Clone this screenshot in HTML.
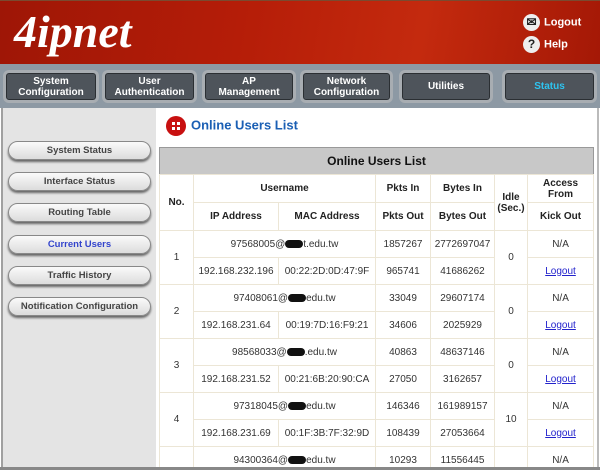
<!DOCTYPE html>
<html><head><meta charset="utf-8"><style>
*{margin:0;padding:0;box-sizing:border-box}
html,body{width:600px;height:470px;overflow:hidden}
body{background:#fff;font-family:"Liberation Sans",Arial,sans-serif;position:relative}
#hdr{position:absolute;left:0;top:0;width:600px;height:64px;background:linear-gradient(100deg,#9e1606 0%,#b51d08 40%,#c42a0e 70%,#a41806 100%);border-top:1px solid #7a4a30}
#logo{position:absolute;left:14px;top:4px;font-family:"Liberation Serif",serif;font-style:italic;font-weight:bold;font-size:46px;color:#fff}
.hl{position:absolute;left:523px;color:#fff;font-weight:bold;font-size:11px}
.hl i{display:inline-block;width:17px;height:17px;border-radius:50%;background:#eee;color:#222;font-style:normal;text-align:center;line-height:17px;font-size:12px;vertical-align:middle;margin-right:4px}
#nav{position:absolute;left:0;top:64px;width:600px;height:44px;background:#8d99a4}
.nb{position:absolute;top:6px;height:33px;border-radius:6px;background:#4e545b;border:3px solid #a8adb2;box-shadow:inset 0 0 0 1px #2b2f33;color:#fff;font-weight:bold;font-size:10px;text-align:center;display:flex;align-items:center;justify-content:center;line-height:11px}
#side{position:absolute;left:1px;top:108px;width:155px;height:359px;background:#e4e4e4;border-left:2px solid #a0a0a0}
.sb{position:absolute;left:5px;width:143px;height:19px;border-radius:10px;background:linear-gradient(#fafafa,#dcdcdc);border:1px solid #888;box-shadow:0 2px 2px #666;text-align:center;font-size:9.5px;font-weight:bold;color:#444;line-height:17px}
#bot{position:absolute;left:0;top:467px;width:600px;height:3px;background:#888;z-index:5}
#rb{position:absolute;left:597px;top:108px;width:2px;height:359px;background:#bbb}
#ttl{position:absolute;left:166px;top:116px;font-size:13px;font-weight:bold;color:#1a5fb4}
#ttl i{display:inline-block;width:20px;height:20px;border-radius:50%;background:#c81010;vertical-align:middle;margin-right:5px;position:relative}
#ttl i:after{content:"";position:absolute;left:6px;top:6px;width:8px;height:8px;background:linear-gradient(#c81010,#c81010) center/8px 2px no-repeat,linear-gradient(90deg,#fff 3px,transparent 3px,transparent 5px,#fff 5px)}
#clip{position:absolute;left:0;top:108px;width:600px;height:359px;overflow:hidden}
table{position:absolute;left:159px;top:39px;width:434px;border-collapse:collapse;border:1px solid #999;font-size:10px;color:#333;text-align:center;table-layout:fixed}
td{border:1px solid #ece6d6;height:27px;padding:0}
th{background:#c8c8c8;height:27px;font-size:12px;color:#111}
.h td{font-weight:bold;color:#222;height:28px}
a{color:#2222cc;text-decoration:underline}
.bl{display:inline-block;width:18px;height:8px;background:#111;border-radius:4px;vertical-align:middle}
</style></head><body>
<div id="hdr"><div id="logo">4ipnet</div>
<div class="hl" style="top:13px"><i>✉</i>Logout</div>
<div class="hl" style="top:35px"><i>?</i>Help</div></div>
<div id="nav">
<div class="nb" style="left:3px;width:96px">System<br>Configuration</div>
<div class="nb" style="left:102px;width:95px">User<br>Authentication</div>
<div class="nb" style="left:202px;width:94px">AP<br>Management</div>
<div class="nb" style="left:300px;width:93px">Network<br>Configuration</div>
<div class="nb" style="left:399px;width:94px">Utilities</div>
<div class="nb" style="left:502px;width:95px;color:#2ec4f0">Status</div>
</div>
<div id="side">
<div class="sb" style="top:33px">System Status</div>
<div class="sb" style="top:64px">Interface Status</div>
<div class="sb" style="top:95px">Routing Table</div>
<div class="sb" style="top:127px;color:#3344cc">Current Users</div>
<div class="sb" style="top:158px">Traffic History</div>
<div class="sb" style="top:189px">Notification Configuration</div>
</div>
<div id="rb"></div><div id="bot"></div>
<div id="ttl"><i></i>Online Users List</div>
<div id="clip">
<table>
<col style="width:34px"><col style="width:85px"><col style="width:97px"><col style="width:55px"><col style="width:64px"><col style="width:33px"><col style="width:66px">
<tr><th colspan="7">Online Users List</th></tr>
<tr class="h"><td rowspan="2">No.</td><td colspan="2">Username</td><td>Pkts In</td><td>Bytes In</td><td rowspan="2">Idle<br>(Sec.)</td><td>Access<br>From</td></tr>
<tr class="h"><td>IP Address</td><td>MAC Address</td><td>Pkts Out</td><td>Bytes Out</td><td>Kick Out</td></tr>
<tr><td rowspan="2">1</td><td colspan="2">97568005@<span class="bl"></span>t.edu.tw</td><td>1857267</td><td>2772697047</td><td rowspan="2">0</td><td>N/A</td></tr>
<tr><td>192.168.232.196</td><td>00:22:2D:0D:47:9F</td><td>965741</td><td>41686262</td><td><a>Logout</a></td></tr>
<tr><td rowspan="2">2</td><td colspan="2">97408061@<span class="bl"></span>edu.tw</td><td>33049</td><td>29607174</td><td rowspan="2">0</td><td>N/A</td></tr>
<tr><td>192.168.231.64</td><td>00:19:7D:16:F9:21</td><td>34606</td><td>2025929</td><td><a>Logout</a></td></tr>
<tr><td rowspan="2">3</td><td colspan="2">98568033@<span class="bl"></span>.edu.tw</td><td>40863</td><td>48637146</td><td rowspan="2">0</td><td>N/A</td></tr>
<tr><td>192.168.231.52</td><td>00:21:6B:20:90:CA</td><td>27050</td><td>3162657</td><td><a>Logout</a></td></tr>
<tr><td rowspan="2">4</td><td colspan="2">97318045@<span class="bl"></span>edu.tw</td><td>146346</td><td>161989157</td><td rowspan="2">10</td><td>N/A</td></tr>
<tr><td>192.168.231.69</td><td>00:1F:3B:7F:32:9D</td><td>108439</td><td>27053664</td><td><a>Logout</a></td></tr>
<tr><td></td><td colspan="2">94300364@<span class="bl"></span>edu.tw</td><td>10293</td><td>11556445</td><td></td><td>N/A</td></tr>
</table>
</div>
</body></html>
